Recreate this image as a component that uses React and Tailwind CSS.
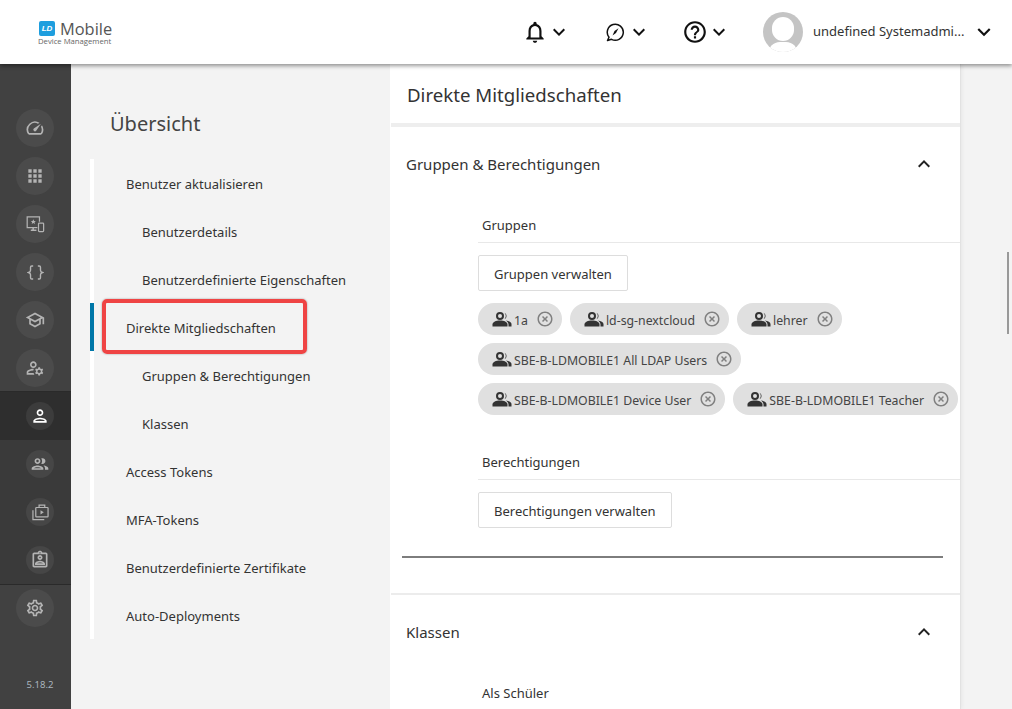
import React from "react";
import {
  MdOutlineSpeed, MdApps, MdOutlineSchool, MdOutlineManageAccounts, MdOutlinePerson,
  MdOutlinePeople, MdOutlineSettings, MdOutlineAssignmentInd, MdExpandMore, MdExpandLess,
  MdOutlineHighlightOff, MdOutlineNotifications, MdOutlineHelpOutline,
} from "react-icons/md";

const Font = "font-['Noto_Sans','Open_Sans',sans-serif]";

function DevicesIcon() {
  return (
    <svg viewBox="0 0 20 18" className="w-[19px] h-[17px]" fill="none" stroke="currentColor" strokeWidth="1.3">
      <path d="M12 12.2H1.2V1h13v5" />
      <path d="M5 15h6M7.5 12.2V15" strokeWidth="1.6" />
      <rect x="13.2" y="7.5" width="5.4" height="9" rx="0.8" />
      <path d="M7.7 3.5l.8 1.7 1.8.2-1.3 1.2.4 1.8-1.7-.9-1.7.9.4-1.8-1.3-1.2 1.8-.2z" fill="currentColor" stroke="none" />
    </svg>
  );
}
function BracesIcon() {
  return (
    <svg viewBox="0 0 18 16" className="w-[17px] h-[15px]" fill="none" stroke="currentColor" strokeWidth="1.5">
      <path d="M6.500 1H5Q3.700 1 3.700 2.500v3Q3.700 7.400 1.500 8q2.200.6 2.200 2.500v3Q3.700 15 5 15h1.500" />
      <path d="M11.500 1H13q1.300 0 1.300 1.500v3q0 1.900 2.200 2.500-2.200.6-2.200 2.500v3q0 1.500-1.300 1.500h-1.500" />
    </svg>
  );
}
function PlayStackIcon() {
  return (
    <svg viewBox="0 0 18 18" className="w-[17px] h-[17px]" fill="none" stroke="currentColor" strokeWidth="1.3">
      <rect x="4" y="3.700" width="13" height="10" rx="0.8" />
      <path d="M7.500 3.700V1.200h6v2.500" />
      <path d="M1 6.500v10h12" />
      <path d="M9 6.500l3.500 2.300L9 11z" fill="currentColor" stroke="none" />
    </svg>
  );
}
function ChatCompass() {
  return (
    <svg viewBox="0 0 20 20" className="w-[20px] h-[20px]" fill="none" stroke="currentColor" strokeWidth="1.5">
      <path d="M2.500 18.500 4 15.200A8 8 0 1 1 6.500 17.300Z" strokeLinejoin="round" />
      <path d="M13.500 6.300 11 11 7.500 13.500 9.500 9Z" fill="currentColor" stroke="none" />
    </svg>
  );
}
function ChipPeople() {
  return (
    <svg viewBox="0 0 20 15" className="w-[20px] h-[15px] shrink-0 mt-px" fill="#333">
      <circle cx="8" cy="4" r="3" fill="none" stroke="#333" strokeWidth="2" />
      <path d="M12.500 .8a3.500 3.500 0 0 1 0 6.400 5 5 0 0 0 0-6.400z" />
      <path d="M.5 14.500v-2C.5 10 4 8.500 8 8.500s7.500 1.500 7.500 4v2z" />
      <path d="M13.800 8.500c3.200.4 5.700 1.600 5.700 3.500v2.500h-3v-2c0-1.600-1.200-3-2.700-4z" />
    </svg>
  );
}

function RailItem({ children, active, small }) {
  if (small) {
    return (
      <div className={`h-12 flex items-center justify-center pl-[9px] ${active ? "bg-[#2e2e2e] text-white" : "text-[#b4b4b4]"}`}>
        <div className={`w-7 h-7 rounded-full flex items-center justify-center ${active ? "bg-[#3c3c3c]" : "bg-[#464646]"}`}>{children}</div>
      </div>
    );
  }
  return (
    <div className="h-12 flex items-center justify-center pr-px text-[#b4b4b4]">
      <div className="w-[38px] h-[38px] rounded-full bg-[#4b4b4b] flex items-center justify-center">{children}</div>
    </div>
  );
}

function Rail() {
  return (
    <aside className="w-[71px] shrink-0 bg-[#414141] flex flex-col pt-10 relative">
      <RailItem><MdOutlineSpeed size={20} /></RailItem>
      <RailItem><MdApps size={20} /></RailItem>
      <RailItem><DevicesIcon /></RailItem>
      <RailItem><BracesIcon /></RailItem>
      <RailItem><MdOutlineSchool size={20} /></RailItem>
      <RailItem><MdOutlineManageAccounts size={20} /></RailItem>
      <div className="bg-[#3a3a3a] border-y border-[#2a2a2a] -my-px">
        <RailItem small active><MdOutlinePerson size={20} /></RailItem>
        <RailItem small><MdOutlinePeople size={20} /></RailItem>
        <RailItem small><PlayStackIcon /></RailItem>
        <RailItem small><MdOutlineAssignmentInd size={20} /></RailItem>
      </div>
      <RailItem><MdOutlineSettings size={20} /></RailItem>
      <div className="flex-1" />
      <div className="h-[48px] text-center pl-[9px] pt-[17px] text-[9.5px] leading-[14px] text-[#a9b4bd]">5.18.2</div>
    </aside>
  );
}

function NavRow({ label, sub, active }) {
  return (
    <div className={`h-12 flex items-center pt-[4px] border-l-4 -ml-1 ${active ? "border-[#0077a8]" : "border-transparent"} ${sub ? "pl-[48px]" : "pl-[32px]"} text-[13px] text-[#333]`}>
      {label}
    </div>
  );
}

function SideNav() {
  return (
    <nav className="w-[319px] shrink-0 bg-[#f3f3f3] pl-[19px] pt-[41px] relative">
      <h2 className="pl-5 pt-[2px] text-[20px] leading-[34px] text-[#444] h-[54px]">Übersicht</h2>
      <div className="border-l-4 border-white w-[270px]">
        <NavRow label="Benutzer aktualisieren" />
        <NavRow label="Benutzerdetails" sub />
        <NavRow label="Benutzerdefinierte Eigenschaften" sub />
        <NavRow label="Direkte Mitgliedschaften" active />
        <NavRow label="Gruppen & Berechtigungen" sub />
        <NavRow label="Klassen" sub />
        <NavRow label="Access Tokens" />
        <NavRow label="MFA-Tokens" />
        <NavRow label="Benutzerdefinierte Zertifikate" />
        <NavRow label="Auto-Deployments" />
      </div>
      <div className="absolute left-[31px] top-[235px] w-[205px] h-[55px] border-4 border-[#ef4444] rounded-[5px] shadow-[0_0_2px_rgba(0,0,0,0.4)]" />
    </nav>
  );
}

function Chip({ label }) {
  return (
    <span className="h-8 rounded-full bg-[#e0e0e0] flex items-center pl-[14px] pr-[8px] text-[12.3px] text-[#444] whitespace-nowrap">
      <ChipPeople />
      <span className="ml-[2px] pt-[5px]">{label}</span>
      <MdOutlineHighlightOff size={18} className="ml-[8px] text-[#808080]" />
    </span>
  );
}

function Button({ children }) {
  return (
    <div className="inline-flex items-center h-9 px-[15px] pt-[3px] border border-[#ddd] rounded-[2px] bg-white text-[13px] text-[#333]">{children}</div>
  );
}

function SubHead({ children }) {
  return <div className="ml-[87px] pl-1 pt-[5px] h-[35px] border-b border-[#e8e8e8] text-[13px] leading-[24px] text-[#333]">{children}</div>;
}

function Main() {
  return (
    <main className="w-[571px] shrink-0 bg-white border-x border-l-white border-r-[#e2e2e2] shadow-[0_0_5px_rgba(0,0,0,0.08)] overflow-hidden">
      <div className="h-[63px] border-b-4 border-[#eeeeee] pl-[16px] pt-[15px] text-[18.65px] leading-[32px] text-[#333]">Direkte Mitgliedschaften</div>
      <div className="h-[74px] flex items-center justify-between pl-[15px] pr-[24px] text-[15px] text-[#333]">
        <span>Gruppen & Berechtigungen</span>
        <MdExpandLess size={24} className="text-[#222]" />
      </div>
      <div className="h-[7px]" />
      <SubHead>Gruppen</SubHead>
      <div className="ml-[87px] mt-[12px]"><Button>Gruppen verwalten</Button></div>
      <div className="ml-[87px] mt-[12px] flex flex-wrap gap-x-2 gap-y-2 w-[490px]">
        <Chip label="1a" />
        <Chip label="ld-sg-nextcloud" />
        <Chip label="lehrer" />
        <Chip label="SBE-B-LDMOBILE1 All LDAP Users" />
        <Chip label="SBE-B-LDMOBILE1 Device User" />
        <Chip label="SBE-B-LDMOBILE1 Teacher" />
      </div>
      <div className="h-[30px]" />
      <SubHead>Berechtigungen</SubHead>
      <div className="ml-[87px] mt-[12px]"><Button>Berechtigungen verwalten</Button></div>
      <div className="ml-[11px] mt-[28px] w-[541px] h-[2px] bg-[#7d7d7d]" />
      <div className="mt-[35px] h-[2px] bg-[#ececec]" />
      <div className="h-[74px] flex items-center justify-between pl-[15px] pr-[24px] text-[15px] text-[#333]">
        <span>Klassen</span>
        <MdExpandLess size={24} className="text-[#222]" />
      </div>
      <div className="h-[12px]" />
      <div className="ml-[87px] pl-1 text-[13px] leading-[24px] text-[#333]">Als Schüler</div>
    </main>
  );
}

function Header() {
  return (
    <header className="h-16 bg-white shadow-[0_2px_4px_rgba(0,0,0,0.4)] relative z-10 flex items-center">
      <div className="w-[500px] pl-[39px] pt-[2px] shrink-0">
        <div className="flex items-start h-[16px]">
          <div className="w-4 h-[15px] rounded-[2px] bg-[#1e9ede] text-white text-[8px] font-bold italic leading-[15px] text-center font-['Liberation_Sans']">LD</div>
          <span className="ml-[5px] text-[16.4px] leading-[16px] text-[#555] font-['Open_Sans']">Mobile</span>
        </div>
        <div className="text-[7.7px] leading-[8px] text-[#666] -ml-px font-['Open_Sans'] whitespace-nowrap">Device Management</div>
      </div>
      <div className="flex items-center text-[#111]">
        <MdOutlineNotifications size={26} className="ml-[22px]" />
        <MdExpandMore size={24} className="-ml-px" />
        <span className="ml-[34px]"><ChatCompass /></span>
        <MdExpandMore size={24} className="ml-[2px]" />
        <MdOutlineHelpOutline size={26} className="ml-[31px]" />
        <MdExpandMore size={24} className="ml-[-1px]" />
        <div className="ml-[32px] w-10 h-10 rounded-full bg-[#c4c4c4] overflow-hidden relative shrink-0">
          <div className="absolute left-[9px] top-[5px] w-[22px] h-6 rounded-full bg-white" />
          <div className="absolute left-[5px] top-[30px] w-[30px] h-6 rounded-full bg-white" />
        </div>
        <span className="ml-[10px] w-[156px] text-[13px] text-[#333] whitespace-nowrap">undefined Systemadmi...</span>
        <MdExpandMore size={26} className="ml-[2px]" />
      </div>
    </header>
  );
}

export default function App() {
  return (
    <div className={`w-[1012px] h-[709px] overflow-hidden relative bg-[#f3f3f3] ${Font}`}>
      <Header />
      <div className="flex h-[645px]">
        <Rail />
        <SideNav />
        <Main />
      </div>
      <div className="absolute left-[1007px] top-[252px] w-[2px] h-[82px] bg-[#999]" />
    </div>
  );
}
